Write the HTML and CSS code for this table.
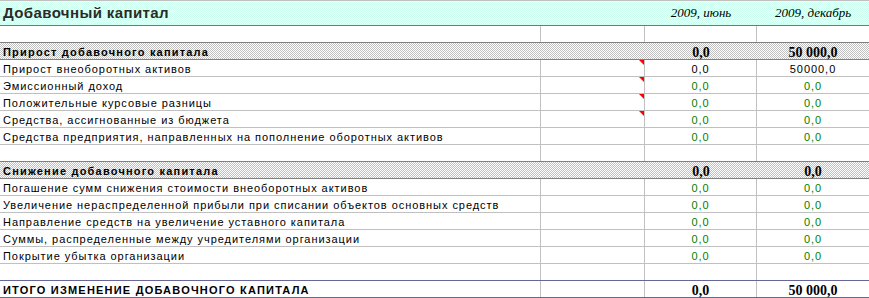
FILE: index.html
```html
<!DOCTYPE html>
<html lang="ru">
<head>
<meta charset="utf-8">
<title>Добавочный капитал</title>
<link rel="stylesheet" href="styles.css">
</head>
<body>
<div class="sheet">
  <div class="row head">
    <div class="title">Добавочный капитал</div>
    <div class="period">2009, июнь</div>
    <div class="period">2009, декабрь</div>
  </div>
  <div class="row blank before-section"><div class="c lbl"></div><div class="c"></div><div class="c"></div><div class="c last"></div></div>
  <div class="row section">
    <div class="c lbl">Прирост добавочного капитала</div><div class="c"></div><div class="c num">0,0</div><div class="c num last">50 000,0</div>
  </div>
  <div class="row"><div class="c lbl">Прирост внеоборотных активов</div><div class="c note"></div><div class="c val">0,0</div><div class="c val last">50000,0</div></div>
  <div class="row"><div class="c lbl">Эмиссионный доход</div><div class="c note"></div><div class="c val green">0,0</div><div class="c val green last">0,0</div></div>
  <div class="row"><div class="c lbl">Положительные курсовые разницы</div><div class="c note"></div><div class="c val green">0,0</div><div class="c val green last">0,0</div></div>
  <div class="row"><div class="c lbl">Средства, ассигнованные из бюджета</div><div class="c note"></div><div class="c val green">0,0</div><div class="c val green last">0,0</div></div>
  <div class="row"><div class="c lbl">Средства предприятия, направленных на пополнение оборотных активов</div><div class="c"></div><div class="c val green">0,0</div><div class="c val green last">0,0</div></div>
  <div class="row blank before-section"><div class="c lbl"></div><div class="c"></div><div class="c"></div><div class="c last"></div></div>
  <div class="row section">
    <div class="c lbl">Снижение добавочного капитала</div><div class="c"></div><div class="c num">0,0</div><div class="c num last">0,0</div>
  </div>
  <div class="row"><div class="c lbl">Погашение сумм снижения стоимости внеоборотных активов</div><div class="c"></div><div class="c val green">0,0</div><div class="c val green last">0,0</div></div>
  <div class="row"><div class="c lbl">Увеличение нераспределенной прибыли при списании объектов основных средств</div><div class="c"></div><div class="c val green">0,0</div><div class="c val green last">0,0</div></div>
  <div class="row"><div class="c lbl">Направление средств на увеличение уставного капитала</div><div class="c"></div><div class="c val green">0,0</div><div class="c val green last">0,0</div></div>
  <div class="row"><div class="c lbl">Суммы, распределенные между учредителями организации</div><div class="c"></div><div class="c val green">0,0</div><div class="c val green last">0,0</div></div>
  <div class="row"><div class="c lbl">Покрытие убытка организации</div><div class="c"></div><div class="c val green">0,0</div><div class="c val green last">0,0</div></div>
  <div class="row blank before-total"><div class="c lbl"></div><div class="c"></div><div class="c"></div><div class="c last"></div></div>
  <div class="row total">
    <div class="c lbl">ИТОГО ИЗМЕНЕНИЕ ДОБАВОЧНОГО КАПИТАЛА</div><div class="c"></div><div class="c num">0,0</div><div class="c num last">50 000,0</div>
  </div>
</div>
</body>
</html>
```
FILE: styles.css
```css
html, body {
  margin: 0;
  padding: 0;
  background: #ffffff;
}

.sheet {
  width: 869px;
  font-family: "Liberation Sans", Arial, sans-serif;
  font-size: 11px;
  letter-spacing: 0.95px;
  color: #000000;
}

.row {
  display: grid;
  grid-template-columns: 541px 104px 112px 112px;
  height: 17px;
  box-sizing: border-box;
  border-bottom: 1px solid #c0c0c0;
}

.row.head {
  grid-template-columns: 645px 112px 112px;
  height: 26px;
  border-top: 1px solid #c0c0c0;
  border-bottom: 1px solid #6b7894;
  background-color: #e4fff4;
  background-image: repeating-conic-gradient(#ccffee 0 25%, #fbffe8 0 50%);
  background-size: 2px 2px;
}

.title {
  font-weight: bold;
  font-size: 15px;
  letter-spacing: 0.4px;
  line-height: 24px;
  padding-left: 3px;
  color: #2a2a2a;
}

.period {
  font-family: "Liberation Serif", "Times New Roman", serif;
  font-style: italic;
  font-size: 13px;
  letter-spacing: 0;
  line-height: 24px;
  text-align: center;
}

.c {
  position: relative;
  border-right: 1px solid #c0c0c0;
  padding-top: 3px;
  line-height: 13px;
  white-space: nowrap;
  overflow: visible;
}

.c.last {
  border-right: none;
}

.lbl {
  padding-left: 3px;
}

.val {
  text-align: center;
}

.green {
  color: #008000;
}

.num {
  font-family: "Liberation Serif", "Times New Roman", serif;
  font-weight: bold;
  font-size: 14px;
  letter-spacing: 0;
  text-align: center;
}

.row.before-section {
  border-bottom-color: #808080;
}

.row.section {
  border-bottom-color: #808080;
  background-image: repeating-conic-gradient(#c0c0c0 0 25%, #ffffff 0 50%);
  background-size: 2px 2px;
}

.row.section .c {
  border-right: none;
}

.row.section .lbl,
.row.total .lbl {
  font-weight: bold;
  letter-spacing: 1.2px;
}

.row.before-total {
  border-bottom-color: #666699;
}

.row.total {
  border-bottom-color: #666699;
}

.note::after {
  content: "";
  position: absolute;
  top: 0;
  right: 0;
  width: 0;
  height: 0;
  border-top: 5px solid #ff0000;
  border-left: 5px solid transparent;
}
```
